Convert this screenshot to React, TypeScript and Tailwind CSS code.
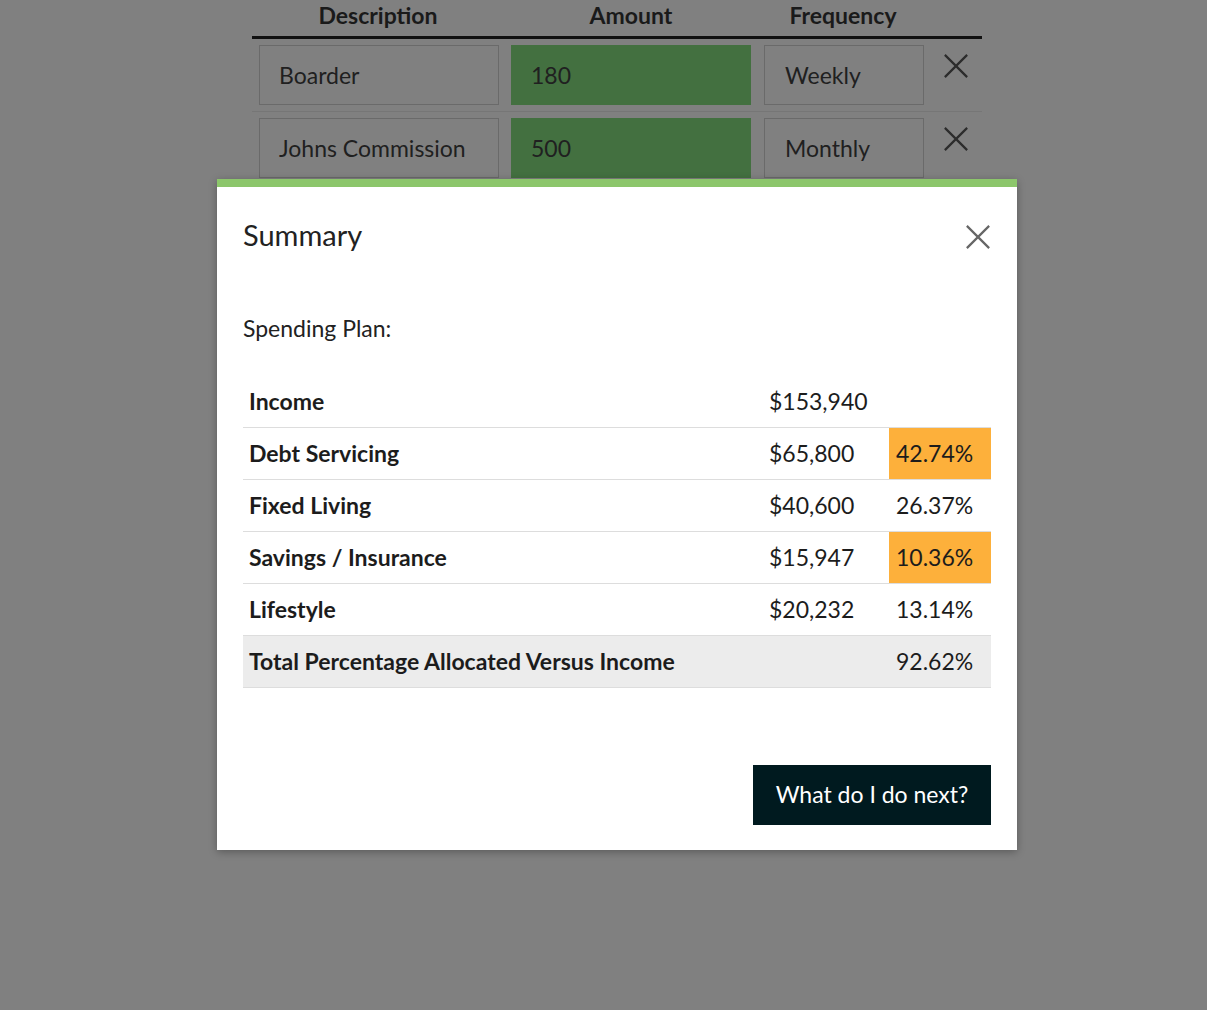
const font = { fontFamily: "Lato, 'Open Sans', sans-serif" };

function XIcon({ className }: { className: string }) {
  return (
    <svg className={className} viewBox="0 0 28 28" fill="none" stroke="currentColor" strokeWidth="2.4" aria-hidden>
      <path d="M2 2l24 24M26 2L2 26" />
    </svg>
  );
}

const bgRows = [
  { desc: "Boarder", amount: "180", freq: "Weekly" },
  { desc: "Johns Commission", amount: "500", freq: "Monthly" },
];

const rows = [
  { label: "Income", amount: "$153,940", pct: "", hi: false },
  { label: "Debt Servicing", amount: "$65,800", pct: "42.74%", hi: true },
  { label: "Fixed Living", amount: "$40,600", pct: "26.37%", hi: false },
  { label: "Savings / Insurance", amount: "$15,947", pct: "10.36%", hi: true },
  { label: "Lifestyle", amount: "$20,232", pct: "13.14%", hi: false },
];

export default function App() {
  return (
    <div className="relative h-[1010px] w-[1207px] overflow-hidden bg-[#808080] text-[#1c1c1c]" style={font}>
      {/* page behind the overlay */}
      <div className="ml-[252px] w-[730px]">
        <div className="flex border-b-[3px] border-[#111] pb-[6px] text-[23px] font-bold leading-[30px] text-[#1a1a1a]">
          <div className="w-[252px] text-center">Description</div>
          <div className="w-[254px] text-center">Amount</div>
          <div className="w-[170px] text-center">Frequency</div>
        </div>
        {bgRows.map((r) => (
          <div key={r.desc} className="flex items-start border-b border-[#767676] py-[6px] text-[23px] text-[#202020]">
            <div className="ml-[7px] flex h-[60px] w-[240px] items-center border border-[#6a6a6a] px-[19px]">{r.desc}</div>
            <div className="ml-[12px] flex h-[60px] w-[240px] items-center bg-[#437040] px-[20px]">{r.amount}</div>
            <div className="ml-[13px] flex h-[60px] w-[160px] items-center border border-[#6a6a6a] px-[20px]">{r.freq}</div>
            <XIcon className="ml-[19px] mt-[8px] h-[26px] w-[26px] text-[#2c2c2c]" />
          </div>
        ))}
      </div>

      {/* modal */}
      <div className="absolute left-[217px] top-[179px] w-[800px] border-t-[8px] border-[#8cc66b] bg-white px-[26px] pb-[25px] shadow-[0_2px_8px_rgba(0,0,0,0.3)]">
        <div className="flex items-center justify-between pt-[30px]">
          <h2 className="text-[29px] leading-[36px] text-[#222]">Summary</h2>
          <XIcon className="mt-[4px] h-[26px] w-[26px] text-[#666]" />
        </div>
        <p className="mt-[60px] text-[23px] leading-[30px] text-[#222]">Spending Plan:</p>
        <table className="mt-[32px] w-full border-collapse text-[23px]">
          <tbody>
            {rows.map((r, i) => (
              <tr key={r.label} className={i > 0 ? "border-t border-[#dddddd]" : ""}>
                <td className="h-[52px] px-[6px] font-bold">{r.label}</td>
                <td className="w-[120px] px-[0px]">{r.amount}</td>
                <td className={`w-[102px] pl-[7px] ${r.hi ? "bg-[#fdb03b]" : ""}`}>{r.pct}</td>
              </tr>
            ))}
            <tr className="border-t border-b border-[#dddddd] bg-[#ececec]">
              <td className="h-[52px] px-[6px] font-bold">Total Percentage Allocated Versus Income</td>
              <td></td>
              <td className="pl-[7px]">92.62%</td>
            </tr>
          </tbody>
        </table>
        <div className="mt-[77px] flex justify-end">
          <button className="h-[60px] w-[238px] bg-[#001a1f] text-[23px] text-white">What do I do next?</button>
        </div>
      </div>
    </div>
  );
}
